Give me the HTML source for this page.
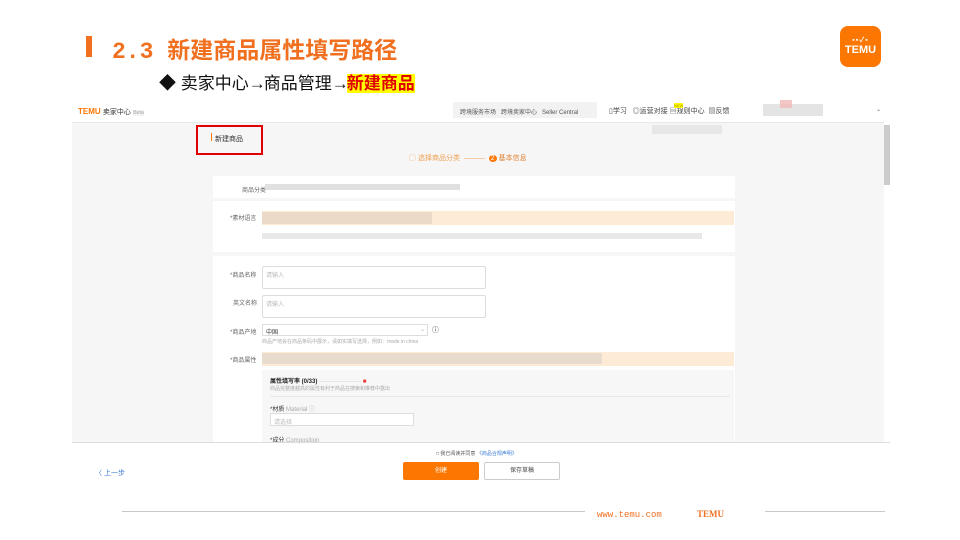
<!DOCTYPE html>
<html><head><meta charset="utf-8"><style>
*{margin:0;padding:0;box-sizing:border-box}
body{width:960px;height:540px;background:#fff;position:relative;overflow:hidden;font-family:"Liberation Sans","Noto Sans CJK SC",sans-serif;}
.a{position:absolute}
.t{font-size:6px;color:#666;white-space:nowrap}
.blur{position:absolute;background:#ddd;opacity:.8}
.ar{display:inline-block;width:15px;text-align:center}
</style></head><body>
<div class="a" style="left:86px;top:36px;width:6px;height:21px;background:#f07020"></div>
<div class="a" style="left:112px;top:31px;font-size:23px;font-weight:bold;color:#f07020;white-space:nowrap;font-family:'Liberation Mono','Noto Sans CJK SC',monospace">2.3 新建商品属性填写路径</div>
<div class="a" style="left:159px;top:69px;font-size:17px;color:#111;white-space:nowrap">◆ 卖家中心<span class="ar">→</span>商品管理<span class="ar">→</span><span style="background:#ffff00;color:#e00000;font-weight:bold">新建商品</span></div>
<div class="a" style="left:840px;top:26px;width:41px;height:41px;background:#fb7701;border-radius:8px;color:#fff;text-align:center;font-weight:bold">
<div style="font-size:7px;margin-top:9px;letter-spacing:1px">▪▪✓▪</div><div style="font-size:11px;line-height:11px">TEMU</div></div>

<!-- screenshot -->
<div class="a" style="left:72px;top:98px;width:818px;height:392px;background:#fff"></div>
<div class="a" style="left:72px;top:122px;width:812px;height:320px;background:#f6f6f6;border-top:1px solid #e8e8e8"></div>
<div class="a" style="left:78px;top:107px;font-size:8px;font-weight:bold;color:#fb7701">TEMU <span style="color:#333;font-weight:normal;font-size:7px">卖家中心</span> <span style="color:#bbb;font-size:5px;background:#f2f2f2">Beta</span></div>
<div class="a" style="left:453px;top:102px;width:144px;height:16px;background:#f2f2f2"></div>
<div class="a t" style="left:460px;top:107px;color:#555">跨境服务市场 &nbsp; 跨境卖家中心 &nbsp; Seller Central</div>
<div class="a t" style="left:609px;top:106px;color:#444;font-size:7px">▯学习 &nbsp; ◎运营对接 ▤规则中心 &nbsp;▧反馈</div>
<div class="a" style="left:674px;top:103px;font-size:4px;background:#ff0;color:#a80">NEW</div>
<div class="blur" style="left:763px;top:104px;width:60px;height:12px;background:#ddd"></div>
<div class="blur" style="left:780px;top:100px;width:12px;height:8px;background:#f2b8b8"></div>
<div class="a t" style="left:876px;top:106px">⌄</div>
<div class="blur" style="left:652px;top:125px;width:70px;height:9px;background:#e4e4e4"></div>
<div class="a" style="left:884px;top:125px;width:6px;height:60px;background:#ccc"></div>

<div class="a" style="left:196px;top:125px;width:67px;height:30px;border:2px solid #e00000"></div>
<div class="a" style="left:211px;top:133px;width:1px;height:8px;background:#fb7701"></div>
<div class="a t" style="left:215px;top:134px;color:#333;font-size:7px">新建商品</div>

<div class="a t" style="left:409px;top:153px;color:#f0a050;font-size:7px">◯ 选择商品分类 &nbsp;——— &nbsp;<span style="background:#fb7701;color:#fff;border-radius:50%;padding:0 2px">2</span> <span style="color:#e08030">基本信息</span></div>

<div class="a" style="left:213px;top:176px;width:522px;height:22px;background:#fff"></div>
<div class="a t" style="left:242px;top:185px">商品分类</div>
<div class="blur" style="left:265px;top:184px;width:195px;height:6px;background:#d8d8d8"></div>
<div class="a" style="left:213px;top:201px;width:522px;height:51px;background:#fff"></div>
<div class="a t" style="left:230px;top:213px">*素材语言</div>
<div class="a" style="left:262px;top:211px;width:472px;height:14px;background:#fdebd6"></div>
<div class="blur" style="left:262px;top:212px;width:170px;height:12px;background:#e6d6c4"></div>
<div class="blur" style="left:262px;top:233px;width:440px;height:6px;background:#e2e2e2"></div>
<div class="a" style="left:213px;top:256px;width:522px;height:186px;background:#fff"></div>
<div class="a t" style="left:230px;top:270px">*商品名称</div>
<div class="a" style="left:262px;top:266px;width:224px;height:23px;border:1px solid #ddd;border-radius:2px"></div>
<div class="a t" style="left:266px;top:270px;color:#bbb">请输入</div>
<div class="a t" style="left:233px;top:298px">英文名称</div>
<div class="a" style="left:262px;top:295px;width:224px;height:23px;border:1px solid #ddd;border-radius:2px"></div>
<div class="a t" style="left:266px;top:299px;color:#bbb">请输入</div>
<div class="a t" style="left:230px;top:327px">*商品产地</div>
<div class="a" style="left:262px;top:324px;width:166px;height:12px;border:1px solid #ddd"></div>
<div class="a t" style="left:266px;top:327px;color:#333">中国</div>
<div class="a t" style="left:420px;top:326px;color:#aaa">⌄</div>
<div class="a t" style="left:432px;top:325px;color:#333;font-size:7px">ⓘ</div>
<div class="a t" style="left:262px;top:338px;color:#aaa;font-size:5px">商品产地会在商品条码中展示，请如实填写选择，例如：made in china</div>
<div class="a t" style="left:230px;top:355px">*商品属性</div>
<div class="a" style="left:262px;top:352px;width:472px;height:14px;background:#fdebd6"></div>
<div class="blur" style="left:262px;top:353px;width:340px;height:11px;background:#e2d8cc"></div>
<div class="a" style="left:262px;top:370px;width:472px;height:72px;background:#f7f7f7"></div>
<div class="a t" style="left:270px;top:376px;color:#222;font-weight:bold">属性填写率 (0/33) <span style="color:#ddd">———————</span> <span style="color:#e33">■</span></div>
<div class="a t" style="left:270px;top:385px;color:#aaa;font-size:5px">商品完整度越高的属性有利于商品在搜索和推荐中露出</div>
<div class="a" style="left:270px;top:396px;width:460px;height:1px;background:#e8e8e8"></div>
<div class="a t" style="left:270px;top:404px;color:#333">*材质 <span style="color:#aaa">Material ⓘ</span></div>
<div class="a" style="left:270px;top:413px;width:144px;height:13px;border:1px solid #ddd;background:#fff"></div>
<div class="a t" style="left:274px;top:417px;color:#bbb">请选择</div>
<div class="a t" style="left:270px;top:435px;color:#333">*成分 <span style="color:#aaa">Composition</span></div>

<div class="a" style="left:72px;top:442px;width:818px;height:1px;background:#ddd"></div>
<div class="a t" style="left:436px;top:450px;color:#555;font-size:5px">□ 我已阅读并同意 <span style="color:#3a7bd5">《商品合规声明》</span></div>
<div class="a t" style="left:95px;top:468px;color:#3a7bd5;font-size:7px">〈 上一步</div>
<div class="a" style="left:403px;top:462px;width:76px;height:18px;background:#fb7701;border-radius:2px;color:#fff;font-size:6px;text-align:center;line-height:18px">创建</div>
<div class="a" style="left:484px;top:462px;width:76px;height:18px;border:1px solid #ccc;border-radius:2px;color:#444;font-size:6px;text-align:center;line-height:16px">保存草稿</div>

<!-- footer -->
<div class="a" style="left:122px;top:511px;width:463px;height:1px;background:#c8c8c8"></div>
<div class="a" style="left:765px;top:511px;width:120px;height:1px;background:#c8c8c8"></div>
<div class="a" style="left:597px;top:510px;font-size:9px;color:#f07020;font-family:'Liberation Mono',monospace">www.temu.com</div>
<div class="a" style="left:697px;top:509px;font-size:9px;color:#f07020;font-weight:bold;font-family:'Liberation Serif',serif">TEMU</div>
</body></html>
